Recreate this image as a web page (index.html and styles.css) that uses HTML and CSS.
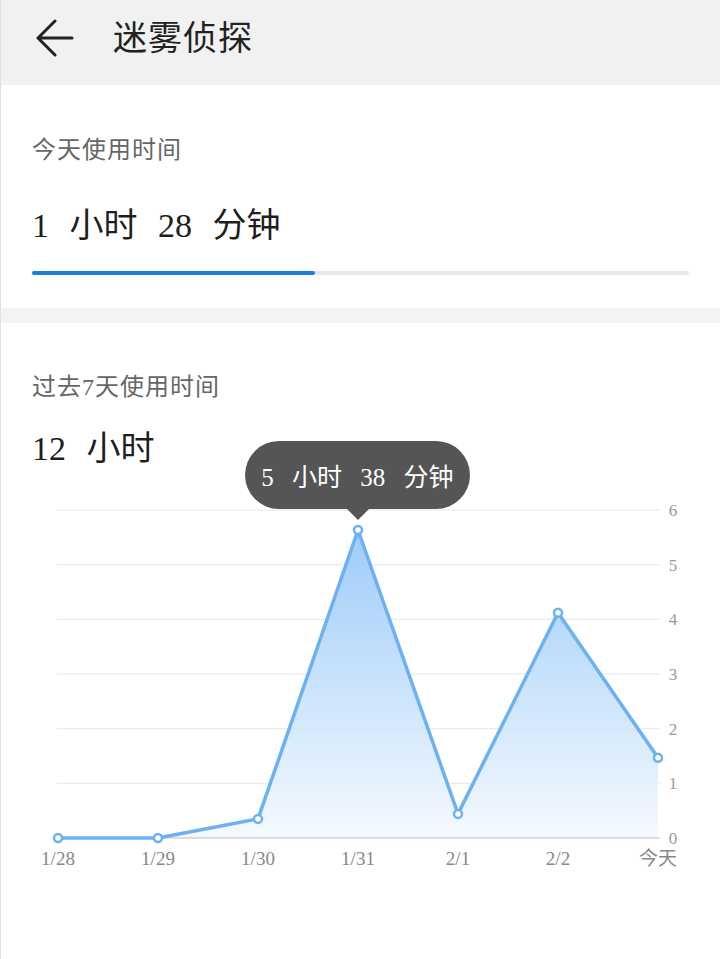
FILE: index.html
```html
<!DOCTYPE html>
<html lang="zh-CN">
<head>
  <meta charset="UTF-8">
  <title>迷雾侦探</title>
  <link rel="stylesheet" href="styles.css">
</head>
<body>
  <div class="header">
    <svg class="back" width="40" height="40" viewBox="0 0 40 40">
      <path d="M36 19 H3 M19 2 L2 19 L19 36" fill="none" stroke="#222" stroke-width="3" stroke-linecap="round" stroke-linejoin="round"/>
    </svg>
    <span class="title">迷雾侦探</span>
  </div>

  <div class="card today">
    <div class="label">今天使用时间</div>
    <div class="value">1 小时 28 分钟</div>
    <div class="progress"><div class="progress-fill" style="width: 43%"></div></div>
  </div>

  <div class="card week">
    <div class="label">过去7天使用时间</div>
    <div class="value">12 小时</div>
    <div class="chart">
      <div class="tooltip">5 小时 38 分钟</div>
      <svg width="720" height="400" viewBox="0 0 720 400">
        <defs>
          <linearGradient id="area" x1="0" y1="0" x2="0" y2="1">
            <stop offset="0" stop-color="#8ec3f7"/>
            <stop offset="1" stop-color="#f3f9ff"/>
          </linearGradient>
        </defs>
        <g stroke="#e6e6e6" stroke-width="1">
          <line x1="57" y1="30" x2="660" y2="30"/>
          <line x1="57" y1="84.7" x2="660" y2="84.7"/>
          <line x1="57" y1="139.3" x2="660" y2="139.3"/>
          <line x1="57" y1="194" x2="660" y2="194"/>
          <line x1="57" y1="248.7" x2="660" y2="248.7"/>
          <line x1="57" y1="303.3" x2="660" y2="303.3"/>
        </g>
        <path d="M58 358 L158 358 L258 338.9 L358 50 L458 333.9 L558 132.8 L658 277.8 L658 358 Z" fill="url(#area)" opacity="0.85"/>
        <line x1="57" y1="358" x2="660" y2="358" stroke="#bdbdbd" stroke-width="1"/>
        <path d="M58 358 L158 358 L258 338.9 L358 50 L458 333.9 L558 132.8 L658 277.8" fill="none" stroke="#6cb1f1" stroke-width="3.5" stroke-linejoin="round"/>
        <g fill="#fff" stroke="#6cb1f1" stroke-width="2.5">
          <circle cx="58" cy="358" r="4"/>
          <circle cx="158" cy="358" r="4"/>
          <circle cx="258" cy="338.9" r="4"/>
          <circle cx="358" cy="50" r="4"/>
          <circle cx="458" cy="333.9" r="4"/>
          <circle cx="558" cy="132.8" r="4"/>
          <circle cx="658" cy="277.8" r="4"/>
        </g>
        <g class="ylabels" text-anchor="middle">
          <text x="673" y="36">6</text>
          <text x="673" y="90.7">5</text>
          <text x="673" y="145.3">4</text>
          <text x="673" y="200">3</text>
          <text x="673" y="254.7">2</text>
          <text x="673" y="309.3">1</text>
          <text x="673" y="364">0</text>
        </g>
        <g class="xlabels" text-anchor="middle">
          <text x="58" y="385">1/28</text>
          <text x="158" y="385">1/29</text>
          <text x="258" y="385">1/30</text>
          <text x="358" y="385">1/31</text>
          <text x="458" y="385">2/1</text>
          <text x="558" y="385">2/2</text>
          <text x="658" y="385">今天</text>
        </g>
      </svg>
    </div>
  </div>
</body>
</html>
```

FILE: styles.css
```css
html, body { margin: 0; padding: 0; }
body {
  width: 720px; height: 959px; overflow: hidden; box-sizing: border-box;
  background: #fff; border-left: 1px solid #e0e0e0;
  font-family: "Liberation Serif", "Noto Sans CJK SC", serif;
  color: #222;
}
.header {
  height: 85px; background: #f1f1f1;
  display: flex; align-items: center;
}
.back { margin-left: 35px; margin-right: 37px; margin-top: -7px; }
.title { font-size: 34px; line-height: 40px; margin-top: -8px; letter-spacing: 1px; }

.card { background: #fff; padding: 0 31px; }
.label { font-size: 24px; line-height: 32px; color: #666; letter-spacing: 1px; }
.value { font-size: 34px; line-height: 44px; color: #1e1e1e; word-spacing: 12px; }

.today { padding-top: 49px; padding-bottom: 33px; border-bottom: 15px solid #f3f3f3; }
.today .value { margin-top: 38px; }
.progress { margin-top: 23px; height: 4px; background: #e8e8e8; border-radius: 2px; }
.progress-fill { height: 4px; background: #1a7fd8; border-radius: 2px; }

.week { padding-top: 48px; padding-left: 0; padding-right: 0; }
.week .label, .week .value { margin-left: 31px; }
.week .value { margin-top: 24px; }

.chart { position: relative; margin-top: 9px; margin-left: -1px; }
.chart svg { display: block; }
.tooltip {
  position: absolute; left: 245px; top: -39px;
  width: 225px; height: 68px; border-radius: 34px;
  background: #555; color: #fff;
  font-size: 25px; line-height: 73px; text-align: center;
  word-spacing: 12px;
}
.tooltip::after {
  content: ""; position: absolute; left: 102px; top: 68px;
  border-left: 11px solid transparent; border-right: 11px solid transparent;
  border-top: 11px solid #555;
}
.ylabels { font-size: 17px; fill: #999; }
.xlabels { font-size: 19px; fill: #888; }
```
